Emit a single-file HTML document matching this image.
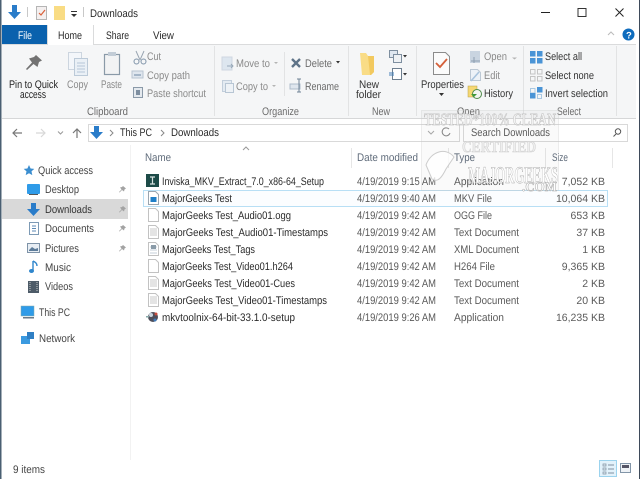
<!DOCTYPE html>
<html><head><meta charset="utf-8"><title>Downloads</title>
<style>
html,body{margin:0;padding:0;background:#fff;width:640px;height:479px;overflow:hidden}
svg{display:block;filter:blur(.35px)}
text{font-family:"Liberation Sans",sans-serif;font-size:11px;fill:#2a2a2a;text-rendering:geometricPrecision}
.g{fill:#8a8a8a}.l{fill:#6b6b6b}.h{fill:#5f6b7a}.d{fill:#5a5a5a}
.wm{font-family:"Liberation Serif",serif;font-weight:bold;fill:#fff;stroke:#a8a8a8;stroke-width:.5}
</style></head><body>
<svg width="640" height="479" viewBox="0 0 640 479" xmlns="http://www.w3.org/2000/svg">
<rect width="640" height="479" fill="#fff"/>
<!-- title bar -->
<path d="M12 5h5v7h4l-6.500 7-6.500-7h4z" fill="#2a7cc9"/>
<rect x="27" y="7" width="1" height="10" fill="#c8c8c8"/>
<rect x="36.500" y="6.500" width="10" height="13" fill="#f4f0f0" stroke="#b5b5b5"/>
<path d="M39 13l2 2 4-5" fill="none" stroke="#d9603a" stroke-width="1.200"/>
<rect x="54" y="6" width="11" height="14" fill="#f9dc84"/>
<rect x="71" y="11" width="6" height="1" fill="#333"/><path d="M71 14h6l-3 3z" fill="#333"/>
<rect x="83" y="7" width="1" height="10" fill="#c8c8c8"/>
<text x="90" y="17" textLength="48" lengthAdjust="spacingAndGlyphs">Downloads</text>
<rect x="541" y="12" width="9" height="1" fill="#222"/>
<rect x="578" y="8.500" width="8" height="8" fill="none" stroke="#333"/>
<path d="M615.500 8.500l8 8m0-8l-8 8" stroke="#222" fill="none"/>
<!-- tabs -->
<rect x="2" y="25" width="45" height="19" fill="#0a61ad"/>
<text x="18" y="39" textLength="14" lengthAdjust="spacingAndGlyphs" style="fill:#fff">File</text>
<rect x="47" y="25" width="47" height="20" fill="#fff"/>
<text x="58" y="39" textLength="24" lengthAdjust="spacingAndGlyphs">Home</text>
<text x="106" y="39" textLength="23" lengthAdjust="spacingAndGlyphs">Share</text>
<text x="153" y="39" textLength="21" lengthAdjust="spacingAndGlyphs">View</text>
<path d="M608 35l3-3 3 3" fill="none" stroke="#bbb"/>
<circle cx="628.500" cy="34.500" r="6" fill="#0f6cbd"/>
<text x="626" y="38.500" style="fill:#fff;font-weight:bold;font-size:9.500px">?</text>
<!-- ribbon -->
<rect x="2" y="44" width="634" height="74" fill="#f5f6f7"/>
<rect x="2" y="44" width="45" height="1" fill="#dadbdc"/><rect x="94" y="44" width="542" height="1" fill="#dadbdc"/>
<rect x="47" y="25" width="1" height="20" fill="#dadbdc"/><rect x="93" y="25" width="1" height="20" fill="#dadbdc"/>
<rect x="48" y="44" width="45" height="1" fill="#fff"/>
<rect x="2" y="118" width="634" height="1" fill="#d6d7d8"/>
<g fill="#e2e3e4"><rect x="214" y="46" width="1" height="70"/><rect x="348" y="46" width="1" height="70"/><rect x="416" y="46" width="1" height="70"/><rect x="523" y="46" width="1" height="70"/><rect x="616" y="46" width="1" height="70"/><rect x="284" y="52" width="1" height="44"/></g>
<!-- clipboard icons -->
<path d="M36 55l6 5.500-3 1.500-1.500 5-4-3-6.500 6-1-1 6-6.500-3-4 5-1.500z" fill="#727272"/>
<rect x="68.500" y="52.500" width="13" height="17" fill="#f3f6fa" stroke="#ccd5df"/>
<rect x="74.500" y="58.500" width="13" height="17" fill="#eaf0f6" stroke="#bccad8"/>
<path d="M77 63h8M77 66h8M77 69h8M77 72h8" stroke="#b5c6d8"/>
<rect x="104.500" y="54.500" width="15" height="20" fill="#f2f3f4" stroke="#8a9aa8" stroke-width="1.200"/>
<rect x="108" y="52" width="8" height="4" fill="#c2ccd6"/>
<path d="M136 51l4 9m4-9l-4 9" stroke="#9aa6b2" fill="none"/>
<circle cx="136.500" cy="61.500" r="2.500" fill="none" stroke="#7f93a8"/><circle cx="143.500" cy="61.500" r="2.500" fill="none" stroke="#7f93a8"/>
<rect x="132" y="71" width="11" height="7" fill="#dfe6ee" stroke="#b8c4d0"/>
<path d="M134 75h7" stroke="#6b85a3"/>
<rect x="133.500" y="87.500" width="9" height="10" fill="#e4e9ee" stroke="#8a99a8"/><rect x="136" y="90" width="4" height="5" fill="#7d8ea0"/>
<!-- organize icons -->
<rect x="222" y="57" width="10" height="13" fill="#dde6ef" stroke="#cfd7e0"/><path d="M227 66h6m-2-2l2 2-2 2" stroke="#98a8b8" fill="none"/>
<rect x="222.500" y="80.500" width="9" height="11" fill="#e4ebf2" stroke="#c2cedb"/><rect x="225.500" y="83.500" width="8" height="9" fill="#eef2f6" stroke="#b8c6d4"/>
<path d="M292 59l8 8m0-8l-8 8" stroke="#5f7488" stroke-width="2.400" fill="none"/>
<rect x="290" y="84" width="10" height="5" fill="#dfe6ee" stroke="#aebccb"/><path d="M299 79v13m-2-13h4m-4 13h4" stroke="#6f8396" fill="none"/>
<!-- new -->
<path d="M360 53h6l2 3h6v16l-3 3h-9z" fill="#f9dc86"/><path d="M368 56h6v16l-3 3h-1z" fill="#f2c95f"/>
<rect x="389.500" y="50.500" width="8" height="7" fill="#dfe7f0" stroke="#7e8fa0"/><rect x="393.500" y="54.500" width="8" height="8" fill="#eef1f4" stroke="#7e8fa0"/>
<rect x="392.500" y="68.500" width="9" height="11" fill="#fff" stroke="#6e7f90"/><path d="M389 73h5M389 75h5" stroke="#4680b8"/>
<path d="M403 55h4l-2 2.500zM403 73h4l-2 2.500z" fill="#333"/>
<!-- open -->
<path d="M433.500 52.500h12l4 4v18h-16z" fill="#fbfbfb" stroke="#8b8b8b"/>
<path d="M436 63l4 4 7-8" fill="none" stroke="#d5603a" stroke-width="1.800"/>
<path d="M439 93h5l-2.500 3z" fill="#333"/>
<rect x="470" y="51" width="10" height="12" fill="#c9d4e0"/><path d="M474 57v6m-3-2h9" stroke="#8d9eb0"/>
<path d="M470.500 69.500h7l3 3v8h-10z" fill="#edf2f7" stroke="#bcc8d4"/><path d="M471 81l8-9" stroke="#a9c4dd" stroke-width="1.600"/>
<rect x="468" y="86" width="9" height="11" fill="#f5d873" stroke="#b7a04a" stroke-width=".5"/>
<circle cx="477" cy="94" r="4.500" fill="#f3f5f3" stroke="#4f8a4a"/><path d="M471 94l3 3 3-3z" fill="#3f9a3a"/>
<path d="M512 57.500h5l-2.500 2z" fill="#b4b4b4"/>
<!-- select -->
<g fill="#4a94d6"><rect x="530" y="51" width="5.500" height="5.500"/><rect x="537" y="51" width="5.500" height="5.500"/><rect x="530" y="58" width="5.500" height="5.500"/><rect x="537" y="58" width="5.500" height="5.500"/></g>
<g fill="none" stroke="#c4c4c4"><rect x="530.500" y="69.500" width="4.500" height="4.500"/><rect x="537.500" y="69.500" width="4.500" height="4.500"/><rect x="530.500" y="76.500" width="4.500" height="4.500"/><rect x="537.500" y="76.500" width="4.500" height="4.500"/></g>
<rect x="530.500" y="88.500" width="4.500" height="4.500" fill="none" stroke="#a9c8e2"/><rect x="537" y="87" width="5.500" height="5.500" fill="#4a94d6"/><rect x="530" y="93" width="5.500" height="5.500" fill="#4a94d6"/><rect x="537.500" y="94.500" width="4" height="4" fill="none" stroke="#a9c8e2"/>
<!-- ribbon text -->
<text x="9" y="88" textLength="49" lengthAdjust="spacingAndGlyphs" style="fill:#222">Pin to Quick</text>
<text x="20" y="98" textLength="26" lengthAdjust="spacingAndGlyphs" style="fill:#222">access</text>
<text x="67" y="88" textLength="21" lengthAdjust="spacingAndGlyphs" class="g">Copy</text>
<text x="101" y="88" textLength="21" lengthAdjust="spacingAndGlyphs" class="g">Paste</text>
<text x="147" y="60" textLength="14" lengthAdjust="spacingAndGlyphs" class="g">Cut</text>
<text x="147" y="79" textLength="43" lengthAdjust="spacingAndGlyphs" class="g">Copy path</text>
<text x="147" y="97" textLength="59" lengthAdjust="spacingAndGlyphs" class="g">Paste shortcut</text>
<text x="87" y="115" textLength="41" lengthAdjust="spacingAndGlyphs" class="l">Clipboard</text>
<text x="236" y="67" textLength="34" lengthAdjust="spacingAndGlyphs" class="g">Move to</text>
<text x="236" y="90" textLength="32" lengthAdjust="spacingAndGlyphs" class="g">Copy to</text>
<path d="M274 62h4l-2 2zM272 85h4l-2 2z" fill="#b4b4b4"/>
<text x="305" y="67" textLength="27" lengthAdjust="spacingAndGlyphs" class="l">Delete</text>
<path d="M336 61h4l-2 2.500z" fill="#333"/>
<text x="305" y="90" textLength="34" lengthAdjust="spacingAndGlyphs" class="l">Rename</text>
<text x="262" y="115" textLength="37" lengthAdjust="spacingAndGlyphs" class="l">Organize</text>
<text x="359" y="88" textLength="20" lengthAdjust="spacingAndGlyphs" style="fill:#333">New</text>
<text x="356" y="98" textLength="25" lengthAdjust="spacingAndGlyphs" style="fill:#333">folder</text>
<text x="372" y="115" textLength="18" lengthAdjust="spacingAndGlyphs" class="l">New</text>
<text x="421" y="88" textLength="43" lengthAdjust="spacingAndGlyphs" style="fill:#333">Properties</text>
<text x="484" y="60" textLength="23" lengthAdjust="spacingAndGlyphs" class="g">Open</text>
<text x="484" y="79" textLength="16" lengthAdjust="spacingAndGlyphs" class="g">Edit</text>
<text x="484" y="97" textLength="29" lengthAdjust="spacingAndGlyphs" style="fill:#333">History</text>
<text x="457" y="115" textLength="23" lengthAdjust="spacingAndGlyphs" class="l">Open</text>
<text x="545" y="60" textLength="37" lengthAdjust="spacingAndGlyphs" style="fill:#333">Select all</text>
<text x="545" y="79" textLength="49" lengthAdjust="spacingAndGlyphs" style="fill:#333">Select none</text>
<text x="545" y="97" textLength="63" lengthAdjust="spacingAndGlyphs" style="fill:#333">Invert selection</text>
<text x="557" y="115" textLength="24" lengthAdjust="spacingAndGlyphs" class="l">Select</text>
<!-- nav bar -->
<path d="M22 133h-9m4-4l-4 4 4 4" fill="none" stroke="#777" stroke-width="1.200"/>
<path d="M36 133h9m-4-4l4 4-4 4" fill="none" stroke="#d8d8d8" stroke-width="1.200"/>
<path d="M58 131.500l2.500 2.500 2.500-2.500" fill="none" stroke="#999"/>
<path d="M77 138v-9m-4 4l4-4 4 4" fill="none" stroke="#777" stroke-width="1.200"/>
<rect x="88.500" y="124.500" width="371" height="17" fill="#fff" stroke="#d9d9d9"/>
<path d="M94 126h5v6h4l-6.500 7-6.500-7h4z" fill="#2a7cc9"/>
<path d="M110 130l3 3-3 3M161 130l3 3-3 3" fill="none" stroke="#888"/>
<text x="120" y="136" textLength="32" lengthAdjust="spacingAndGlyphs">This PC</text>
<text x="171" y="136" textLength="48" lengthAdjust="spacingAndGlyphs">Downloads</text>
<path d="M428 131l3 3 3-3" fill="none" stroke="#aaa"/>
<path d="M449 129a4 4 0 1 0 1 4" fill="none" stroke="#888"/>
<rect x="463.500" y="124.500" width="164" height="17" fill="#fff" stroke="#d9d9d9"/>
<text x="471" y="136" textLength="79" lengthAdjust="spacingAndGlyphs" class="d">Search Downloads</text>
<circle cx="618" cy="131.500" r="2.700" fill="none" stroke="#555"/><path d="M616 134l-2.500 2.500" stroke="#555"/>
<!-- sidebar -->
<rect x="130" y="145" width="1" height="315" fill="#f2f2f2"/>
<rect x="2" y="199" width="126" height="20" fill="#d9d9d9"/>
<path d="M29 165l1.600 3.500 3.700.4-2.800 2.500.8 3.700-3.300-1.900-3.300 1.900.8-3.700-2.800-2.500 3.700-.4z" fill="#3b8ed0"/>
<rect x="27" y="184" width="13" height="10" rx="1" fill="#2f9be8"/><rect x="29" y="194" width="9" height="1" fill="#555"/>
<path d="M31 203h5v6h4l-6.500 7-6.500-7h4z" fill="#2a7cc9"/>
<rect x="29.500" y="222.500" width="9" height="12" fill="#fff" stroke="#7d9ab5"/><path d="M32 226h4M32 228.500h4M32 231h4" stroke="#5d89b5"/>
<rect x="27.500" y="243.500" width="12" height="9" fill="#e8eef4" stroke="#7e93a8"/><path d="M29 250l3-3 3 2 3-1v3H29z" fill="#5d7c9a"/>
<path d="M33 261v10m0-10c2 1 4 2 4 5" stroke="#2f86cc" stroke-width="1.400" fill="none"/><ellipse cx="31.500" cy="271" rx="2.500" ry="2" fill="#2f86cc"/>
<rect x="28" y="281" width="11" height="12" fill="#4d5b68"/><path d="M30 282v10M37 282v10" stroke="#ccc" stroke-dasharray="1 1"/>
<rect x="21" y="306" width="13" height="10" fill="#2f9be8" stroke="#8aa" stroke-width=".5"/><rect x="23" y="317" width="11" height="1.500" fill="#6a7a88"/>
<rect x="21" y="336" width="9" height="8" fill="#3b9ae0"/><rect x="27" y="332" width="7" height="7" fill="#2f7fc4"/>
<g fill="#a3a3a3">
<path d="M123 186l3 2.500-1.500 1-.5 2-2-1.500-2.500 2.500-.5-.5 2.500-2.500-1.500-2 2-.5z"/>
<path d="M123 206l3 2.500-1.500 1-.5 2-2-1.500-2.500 2.500-.5-.5 2.500-2.500-1.500-2 2-.5z"/>
<path d="M123 225l3 2.500-1.500 1-.5 2-2-1.500-2.500 2.500-.5-.5 2.500-2.500-1.500-2 2-.5z"/>
<path d="M123 245l3 2.500-1.500 1-.5 2-2-1.500-2.500 2.500-.5-.5 2.500-2.500-1.500-2 2-.5z"/>
</g>
<text x="38" y="174" textLength="55" lengthAdjust="spacingAndGlyphs" style="fill:#444">Quick access</text>
<text x="45" y="193" textLength="34" lengthAdjust="spacingAndGlyphs" style="fill:#444">Desktop</text>
<text x="45" y="213" textLength="47" lengthAdjust="spacingAndGlyphs" style="fill:#333">Downloads</text>
<text x="45" y="232" textLength="49" lengthAdjust="spacingAndGlyphs" style="fill:#444">Documents</text>
<text x="45" y="252" textLength="34" lengthAdjust="spacingAndGlyphs" style="fill:#444">Pictures</text>
<text x="45" y="271" textLength="26" lengthAdjust="spacingAndGlyphs" style="fill:#444">Music</text>
<text x="45" y="290" textLength="28" lengthAdjust="spacingAndGlyphs" style="fill:#444">Videos</text>
<text x="39" y="316" textLength="31" lengthAdjust="spacingAndGlyphs" style="fill:#444">This PC</text>
<text x="39" y="342" textLength="36" lengthAdjust="spacingAndGlyphs" style="fill:#444">Network</text>
<!-- header -->
<path d="M243 150l3-3 3 3" fill="none" stroke="#999"/>
<g fill="#e6e6e6"><rect x="351" y="148" width="1" height="20"/><rect x="448" y="148" width="1" height="20"/><rect x="545" y="148" width="1" height="20"/><rect x="612" y="148" width="1" height="20"/></g>
<text x="145" y="161" textLength="26" lengthAdjust="spacingAndGlyphs" class="h">Name</text>
<text x="357" y="161" textLength="61" lengthAdjust="spacingAndGlyphs" class="h">Date modified</text>
<text x="454" y="161" textLength="21" lengthAdjust="spacingAndGlyphs" class="h">Type</text>
<text x="552" y="161" textLength="16" lengthAdjust="spacingAndGlyphs" class="h">Size</text>
<!-- selected row -->
<rect x="143.500" y="190.500" width="464" height="16" fill="#fbfdff" stroke="#b8dff5"/>
<!-- file icons -->
<rect x="146" y="174" width="13" height="13" fill="#1d4b48"/><path d="M150 177h5M150 184h5M152.500 177v7" stroke="#d8e4e2" stroke-width="1.200" fill="none"/>
<path d="M148.500 191.500h7l3 3v10h-10z" fill="#fff" stroke="#9aa5af"/><rect x="150.500" y="197" width="6" height="5" fill="#1f7fc8"/>
<g fill="#fff" stroke="#c2c2c2"><path d="M148.500 208.500h7l3 3v10h-10z"/><path d="M148.500 225.500h7l3 3v10h-10z"/><path d="M148.500 242.500h7l3 3v10h-10z"/><path d="M148.500 259.500h7l3 3v10h-10z"/><path d="M148.500 276.500h7l3 3v10h-10z"/><path d="M148.500 293.500h7l3 3v10h-10z"/></g>
<path d="M150 229h7M150 231h7M150 233h7M150 235h7M150 280h7M150 282h7M150 284h7M150 286h7M150 297h7M150 299h7M150 301h7M150 303h7" stroke="#c8c8c8"/>
<path d="M150 247h7M150 250h7M150 253h7" stroke="#c4cfd8"/><rect x="151" y="245" width="5" height="4" fill="#8a9ba8"/>
<circle cx="153" cy="317" r="5" fill="#4e4e5a"/><circle cx="151" cy="315" r="2" fill="#c9d4de"/><circle cx="156" cy="314" r="1.500" fill="#c84b3c"/><circle cx="155" cy="320" r="1.500" fill="#3f79b8"/><rect x="146" y="316" width="3" height="1.500" fill="#8aa"/>
<!-- file rows -->
<g>
<text x="162" y="185" textLength="162" lengthAdjust="spacingAndGlyphs">Inviska_MKV_Extract_7.0_x86-64_Setup</text>
<text x="162" y="202" textLength="70" lengthAdjust="spacingAndGlyphs">MajorGeeks Test</text>
<text x="162" y="219" textLength="129" lengthAdjust="spacingAndGlyphs">MajorGeeks Test_Audio01.ogg</text>
<text x="162" y="236" textLength="166" lengthAdjust="spacingAndGlyphs">MajorGeeks Test_Audio01-Timestamps</text>
<text x="162" y="253" textLength="93" lengthAdjust="spacingAndGlyphs">MajorGeeks Test_Tags</text>
<text x="162" y="270" textLength="131" lengthAdjust="spacingAndGlyphs">MajorGeeks Test_Video01.h264</text>
<text x="162" y="287" textLength="133" lengthAdjust="spacingAndGlyphs">MajorGeeks Test_Video01-Cues</text>
<text x="162" y="304" textLength="165" lengthAdjust="spacingAndGlyphs">MajorGeeks Test_Video01-Timestamps</text>
<text x="162" y="321" textLength="133" lengthAdjust="spacingAndGlyphs">mkvtoolnix-64-bit-33.1.0-setup</text>
</g>
<g>
<text class="d" x="357" y="185" textLength="79" lengthAdjust="spacingAndGlyphs">4/19/2019 9:15 AM</text>
<text class="d" x="357" y="202" textLength="79" lengthAdjust="spacingAndGlyphs">4/19/2019 9:40 AM</text>
<text class="d" x="357" y="219" textLength="79" lengthAdjust="spacingAndGlyphs">4/19/2019 9:42 AM</text>
<text class="d" x="357" y="236" textLength="79" lengthAdjust="spacingAndGlyphs">4/19/2019 9:42 AM</text>
<text class="d" x="357" y="253" textLength="79" lengthAdjust="spacingAndGlyphs">4/19/2019 9:42 AM</text>
<text class="d" x="357" y="270" textLength="79" lengthAdjust="spacingAndGlyphs">4/19/2019 9:42 AM</text>
<text class="d" x="357" y="287" textLength="79" lengthAdjust="spacingAndGlyphs">4/19/2019 9:42 AM</text>
<text class="d" x="357" y="304" textLength="79" lengthAdjust="spacingAndGlyphs">4/19/2019 9:42 AM</text>
<text class="d" x="357" y="321" textLength="79" lengthAdjust="spacingAndGlyphs">4/19/2019 9:26 AM</text>
<text class="d" x="454" y="185" textLength="50" lengthAdjust="spacingAndGlyphs">Application</text>
<text class="d" x="454" y="202" textLength="38" lengthAdjust="spacingAndGlyphs">MKV File</text>
<text class="d" x="454" y="219" textLength="38" lengthAdjust="spacingAndGlyphs">OGG File</text>
<text class="d" x="454" y="236" textLength="65" lengthAdjust="spacingAndGlyphs">Text Document</text>
<text class="d" x="454" y="253" textLength="65" lengthAdjust="spacingAndGlyphs">XML Document</text>
<text class="d" x="454" y="270" textLength="41" lengthAdjust="spacingAndGlyphs">H264 File</text>
<text class="d" x="454" y="287" textLength="65" lengthAdjust="spacingAndGlyphs">Text Document</text>
<text class="d" x="454" y="304" textLength="65" lengthAdjust="spacingAndGlyphs">Text Document</text>
<text class="d" x="454" y="321" textLength="50" lengthAdjust="spacingAndGlyphs">Application</text>
<text class="d" x="605" y="185" text-anchor="end" style="font-size:10.500px">7,052 KB</text>
<text class="d" x="605" y="202" text-anchor="end" style="font-size:10.500px">10,064 KB</text>
<text class="d" x="605" y="219" text-anchor="end" style="font-size:10.500px">653 KB</text>
<text class="d" x="605" y="236" text-anchor="end" style="font-size:10.500px">37 KB</text>
<text class="d" x="605" y="253" text-anchor="end" style="font-size:10.500px">1 KB</text>
<text class="d" x="605" y="270" text-anchor="end" style="font-size:10.500px">9,365 KB</text>
<text class="d" x="605" y="287" text-anchor="end" style="font-size:10.500px">2 KB</text>
<text class="d" x="605" y="304" text-anchor="end" style="font-size:10.500px">20 KB</text>
<text class="d" x="605" y="321" text-anchor="end" style="font-size:10.500px">16,235 KB</text>
</g>
<!-- watermark -->
<rect x="421.500" y="110.500" width="137" height="80" fill="#888" fill-opacity=".04" stroke="#ccc" stroke-opacity=".35"/>
<text class="wm" x="424" y="125" textLength="132" lengthAdjust="spacingAndGlyphs" style="font-size:17px;stroke:#b8b8b8;fill:#f4f4f4">TESTED*100% CLEAN</text>
<path d="M426 165c5-14 20-18 28-8l-8 12c-4 8-8 14-14 10z" fill="#fff" fill-opacity=".8" stroke="#ccc"/>
<text class="wm" x="462" y="152" textLength="74" lengthAdjust="spacingAndGlyphs" style="font-size:16px;stroke:#ccc;fill:#eee">CERTIFIED</text>
<text class="wm" x="468" y="183" textLength="90" lengthAdjust="spacingAndGlyphs" style="font-size:24px">MAJORGEEKS</text>
<text class="wm" x="522" y="191" textLength="35" lengthAdjust="spacingAndGlyphs" style="font-size:13px">.COM</text>
<!-- status -->
<text x="13" y="473" textLength="32" lengthAdjust="spacingAndGlyphs" style="fill:#444">9 items</text>
<rect x="599.500" y="460.500" width="17" height="16" fill="#e2f2fb" stroke="#9bd3ee"/>
<path d="M603 464h3v2h-3zM603 468h3v2h-3zM603 472h3v2h-3z" fill="none" stroke="#8090a0" stroke-width=".7"/><path d="M608 465h6M608 469h6M608 473h6" stroke="#8090a0"/>
<rect x="620.500" y="463.500" width="10" height="9" fill="#eef2f6" stroke="#8295a8"/><rect x="622" y="465" width="7" height="3" fill="#556"/>
<!-- window border -->
<rect x="0" y="0" width="1.500" height="479" fill="#4a5f72"/>
<rect x="639" y="0" width="1" height="479" fill="#3e4a5a"/>
</svg>
</body></html>
